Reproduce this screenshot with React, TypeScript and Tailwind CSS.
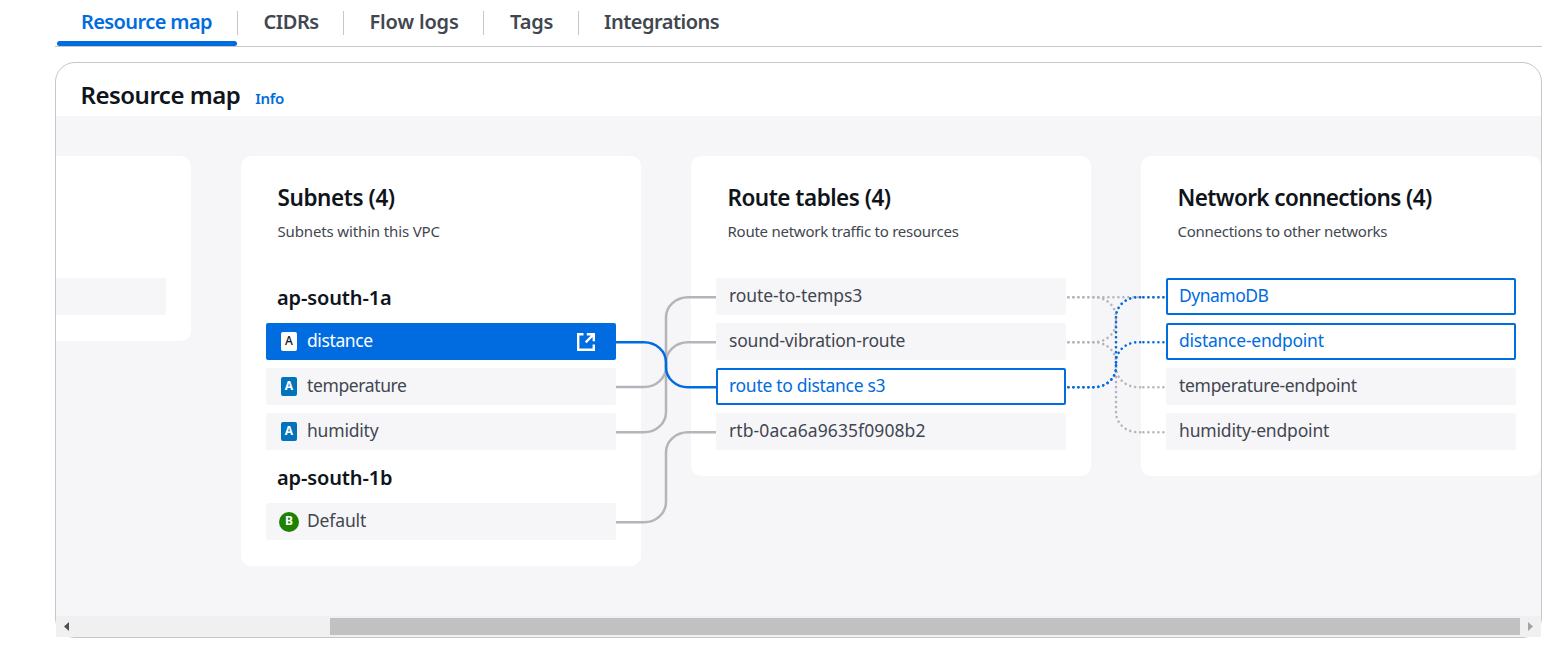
import React from 'react';

type Item = { label: string; spacing: string; badge?: 'A' | 'B'; state?: 'selected' | 'linked' };
type Group = { heading?: string; items: Item[] };

const tabs = [
  { label: 'Resource map', style: 'w-[181px] pl-6 tracking-[-0.6px] text-[#006ce0]', active: true },
  { label: 'CIDRs', style: 'w-[106px] pl-[25.5px] tracking-[-0.45px] text-[#424650]' },
  { label: 'Flow logs', style: 'w-[140px] pl-[25.5px] tracking-[-0.15px] text-[#424650]' },
  { label: 'Tags', style: 'w-[95px] pl-[26px] tracking-[-0.15px] text-[#424650]' },
  { label: 'Integrations', style: 'pl-[25px] tracking-[-0.5px] text-[#424650]', last: true },
];

const subnets: Group[] = [
  {
    heading: 'ap-south-1a',
    items: [
      { label: 'distance', spacing: 'tracking-[-0.4px]', badge: 'A', state: 'selected' },
      { label: 'temperature', spacing: 'tracking-[-0.38px]', badge: 'A' },
      { label: 'humidity', spacing: 'tracking-[-0.2px]', badge: 'A' },
    ],
  },
  { heading: 'ap-south-1b', items: [{ label: 'Default', spacing: 'tracking-[-0.15px]', badge: 'B' }] },
];

const routeTables: Group[] = [
  {
    items: [
      { label: 'route-to-temps3', spacing: 'tracking-[-0.08px]' },
      { label: 'sound-vibration-route', spacing: 'tracking-[-0.19px]' },
      { label: 'route to distance s3', spacing: 'tracking-[-0.3px]', state: 'linked' },
      { label: 'rtb-0aca6a9635f0908b2', spacing: 'tracking-[0.09px]' },
    ],
  },
];

const connections: Group[] = [
  {
    items: [
      { label: 'DynamoDB', spacing: 'tracking-[-0.5px]', state: 'linked' },
      { label: 'distance-endpoint', spacing: 'tracking-[-0.25px]', state: 'linked' },
      { label: 'temperature-endpoint', spacing: 'tracking-[-0.3px]' },
      { label: 'humidity-endpoint', spacing: 'tracking-[-0.17px]' },
    ],
  },
];

function Badge({ kind, inverted }: { kind: 'A' | 'B'; inverted: boolean }) {
  if (kind === 'B') {
    return (
      <span className="mr-2 ml-[13px] flex size-5 items-center justify-center rounded-full bg-[#1d8102] pb-px text-[12px] font-bold text-white">
        B
      </span>
    );
  }
  return (
    <span
      className={`-mt-px mr-[10px] ml-[15px] flex h-[19px] w-4 items-center justify-center rounded-[2px] pb-px text-[12px] ${
        inverted ? 'bg-white font-medium text-[#0f141a]' : 'bg-[#0073bb] font-bold text-white'
      }`}
    >
      A
    </span>
  );
}

function ExternalIcon() {
  return (
    <svg className="mr-5 ml-auto size-5" viewBox="0 0 20 20" fill="none" stroke="white" strokeWidth="2.4">
      <path d="M7.5 2.2H2.2v15.6h15.6v-5.3" />
      <path d="M10.8 2.2h7v7M17.5 2.5l-7.8 7.8" />
    </svg>
  );
}

function Row({ item }: { item: Item }) {
  const look =
    item.state === 'selected'
      ? 'bg-[#006ce0] text-white'
      : item.state === 'linked'
        ? 'bg-white text-[#006ce0] shadow-[inset_0_0_0_2px_#006ce0]'
        : 'bg-[#f6f6f9] text-[#424650]';
  return (
    <div className={`flex h-[37px] items-center rounded-[2px] ${look}`}>
      {item.badge && <Badge kind={item.badge} inverted={item.state === 'selected'} />}
      <span className={`text-[17.5px] leading-[35px] -mt-[2px] ${item.badge ? '' : 'pl-[13px]'} ${item.spacing}`}>{item.label}</span>
      {item.state === 'selected' && <ExternalIcon />}
    </div>
  );
}

function Card({ title, titleSpacing, note, noteSpacing, groups }: {
  title: string; titleSpacing: string; note: string; noteSpacing: string; groups: Group[];
}) {
  return (
    <section className="flex w-[400px] shrink-0 flex-col rounded-[10px] bg-white px-[25px] pt-[27px] pb-[26px]">
      <div className="h-[95px] pl-[11.5px]">
        <h3 className={`text-[22.5px] leading-[30px] font-semibold text-[#0f141a] ${titleSpacing}`}>{title}</h3>
        <p className={`mt-[7px] text-[15px] leading-[22px] text-[#424650] ${noteSpacing}`}>{note}</p>
      </div>
      <div className="flex flex-col gap-2">
        {groups.map((group, i) => (
          <div key={i} className="flex flex-col gap-2">
            {group.heading && (
              <h4 className="h-[37px] pl-[11px] text-[20px] leading-[39px] font-semibold tracking-[-0.12px] text-[#0f141a]">
                {group.heading}
              </h4>
            )}
            {group.items.map((item) => (
              <Row key={item.label} item={item} />
            ))}
          </div>
        ))}
      </div>
    </section>
  );
}

// Each straight run and bend is its own subpath, so the dot pattern restarts at every joint.
function link(from: number, to: number) {
  if (from === to) return `M0 ${from}H100`;
  const s = to > from ? 1 : -1;
  const a = s === 1 ? 1 : 0;
  const parts = [
    `M0 ${from}H25`,
    `M25 ${from}H28A22 20 0 0 ${a} 50 ${from + 20 * s}V${from + 22.5 * s}`,
    `M50 ${to - 22.5 * s}V${to - 20 * s}A22 20 0 0 ${1 - a} 72 ${to}H75`,
    `M75 ${to}H100`,
  ];
  if (Math.abs(to - from) > 45) parts.push(`M50 ${from + 22.5 * s}V${to - 22.5 * s}`);
  return parts.join('');
}

export default function App() {
  return (
    <main className="h-[647px] overflow-hidden bg-white pr-[5px] pl-[55px] font-['Noto_Sans',sans-serif]">
      <nav className="flex h-[47px] border-b border-[#c6c6cd] pl-[2px]">
        {tabs.map((tab) => (
          <div key={tab.label} className={`flex flex-col ${tab.style}`}>
            <div className={`mt-[11px] flex h-6 items-center text-[20px] leading-6 font-semibold ${tab.last ? '' : 'border-r border-[#c6c6cd]'}`}>
              <span className="-mt-[2px]">{tab.label}</span>
            </div>
            {tab.active && <div className="mt-[6px] mr-px -ml-6 h-[5px] rounded-[3px] bg-[#006ce0]" />}
          </div>
        ))}
      </nav>
      <section className="mt-[15px] flex h-[576px] flex-col rounded-[20px] border border-[#c6c6cd]">
        <header className="flex h-[53px] shrink-0 items-baseline gap-[15px] pt-4 pl-[24.5px]">
          <h2 className="text-[24px] leading-8 font-semibold tracking-[-0.5px] text-[#0f141a]">Resource map</h2>
          <a className="text-[15px] leading-5 font-semibold tracking-[-0.3px] text-[#006ce0]">Info</a>
        </header>
        <div className="relative flex h-[500px] shrink-0 items-start justify-end gap-[50px] overflow-hidden bg-[#f6f6f9] pt-10">
          <section className="flex h-[185px] w-[400px] shrink-0 flex-col justify-end rounded-[10px] bg-white p-[25px] pb-[26px]">
            <div className="h-[37px] rounded-[2px] bg-[#f6f6f9]" />
          </section>
          <Card title="Subnets (4)" titleSpacing="tracking-[-0.42px]" note="Subnets within this VPC" noteSpacing="tracking-[-0.14px]" groups={subnets} />
          <Card title="Route tables (4)" titleSpacing="tracking-[-0.5px]" note="Route network traffic to resources" noteSpacing="tracking-[-0.25px]" groups={routeTables} />
          <Card title="Network connections (4)" titleSpacing="tracking-[-0.6px]" note="Connections to other networks" noteSpacing="tracking-[-0.27px]" groups={connections} />
          <svg className="absolute top-[162px] left-[560px] h-[260px] w-[100px]" viewBox="0 0 100 260" fill="none" strokeWidth="2.5">
            <g stroke="#b4b4bb">
              <path d={link(109, 19.2)} />
              <path d={link(154.2, 64.2)} />
              <path d={link(244.2, 154.2)} />
            </g>
            <path d={link(64.2, 109.2)} stroke="#006ce0" />
          </svg>
          <svg
            className="absolute top-[162px] left-[1010px] h-[260px] w-[100px]"
            viewBox="0 0 100 260"
            fill="none"
            strokeWidth="2.6"
            strokeLinecap="round"
            strokeDasharray="0.01 4.99"
            strokeDashoffset="-2.4"
          >
            <g stroke="#b4b4bb">
              <path d={link(19.2, 19.2)} />
              <path d={link(19.2, 109.2)} />
              <path d={link(64.2, 19.2)} />
              <path d={link(64.2, 154.2)} />
            </g>
            <g stroke="#006ce0">
              <path d={link(109.2, 19.2)} />
              <path d={link(109.2, 64.2)} />
            </g>
          </svg>
        </div>
        <div className="flex h-[21px] shrink-0 items-center bg-[#f0f0f0]">
          <svg className="ml-2 h-[9px] w-[5px]" viewBox="0 0 5 9"><path d="M5 0v9L0 4.5z" fill="#505050" /></svg>
          <div className="ml-[261px] h-[17px] w-[1190px] bg-[#c1c1c1]" />
          <svg className="ml-2 h-[9px] w-[5px]" viewBox="0 0 5 9"><path d="M0 0v9l5-4.5z" fill="#a3a3a3" /></svg>
        </div>
      </section>
    </main>
  );
}
